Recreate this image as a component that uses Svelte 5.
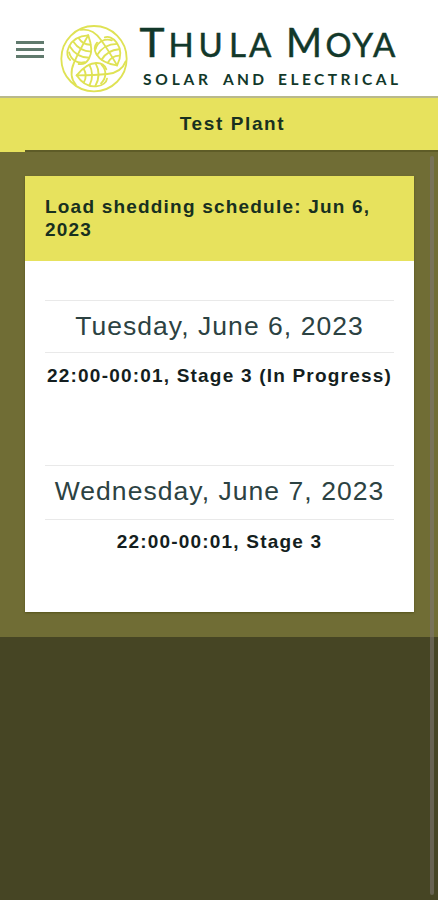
<script>
    const plantName = 'Test Plant';
    const scheduleDate = 'Jun 6, 2023';

    const days = [
        { date: 'Tuesday, June 6, 2023', slots: ['22:00-00:01, Stage 3 (In Progress)'] },
        { date: 'Wednesday, June 7, 2023', slots: ['22:00-00:01, Stage 3'] }
    ];

    // the three leaves of the logo are one shape turned about the centre
    const leafAngles = [0, 120, 240];
</script>

<div class="page">
    <header class="header">
        <button class="menu" aria-label="Menu">
            <span></span>
            <span></span>
            <span></span>
        </button>
        <svg class="emblem" viewBox="0 0 210 210" aria-hidden="true">
            <circle cx="105" cy="104" r="98" />
            {#each leafAngles as angle}
                <g transform="rotate({angle} 105 104)">
                    <path d="M53 154C75 127 94 117 113 117C128 117 138 125 142 136" />
                    <path d="M53 154C69 179 91 189 112 187C131 186 143 174 144 164" />
                    <path d="M53 154C82 154 119 153 145 150C174 147 193 131 200 112" />
                    <path d="M74 134Q86 154 75 174" />
                    <path d="M91 122Q107 152 92 183" />
                    <path d="M110 118Q128 151 109 186" />
                    <path d="M128 123Q140 136 139 151Q138 166 126 178" />
                </g>
            {/each}
        </svg>
        <svg class="wordmark" viewBox="0 0 264 76" role="img" aria-label="Thula Moya Solar and Electrical">
            <g class="name">
                <text x="1.5" y="43" font-size="40" textLength="25" lengthAdjust="spacingAndGlyphs">T</text>
                <text x="30.5" y="43" font-size="33">H</text>
                <text x="60.5" y="43" font-size="33">U</text>
                <text x="91" y="43" font-size="33">L</text>
                <text x="111" y="43" font-size="33">A</text>
                <text x="148" y="43" font-size="40" textLength="36" lengthAdjust="spacingAndGlyphs">M</text>
                <text x="187.5" y="43" font-size="33" textLength="26" lengthAdjust="spacingAndGlyphs">O</text>
                <text x="214.5" y="43" font-size="33">Y</text>
                <text x="235" y="43" font-size="33">A</text>
            </g>
            <g class="tagline">
                <text x="5" y="71" textLength="65">SOLAR</text>
                <text x="85" y="71" textLength="41">AND</text>
                <text x="140" y="71" textLength="120">ELECTRICAL</text>
            </g>
        </svg>
    </header>

    <div class="plant-bar">{plantName}</div>

    <main class="content">
        <section class="card">
            <h2 class="card-header">Load shedding schedule: {scheduleDate}</h2>
            <div class="card-body">
                {#each days as day}
                    <div class="day">
                        <h3>{day.date}</h3>
                        {#each day.slots as slot}
                            <p>{slot}</p>
                        {/each}
                    </div>
                {/each}
            </div>
        </section>
    </main>
    <div class="scrollbar"></div>
</div>

<style>
    :global(body) {
        margin: 0;
        background: #464524;
    }

    .page {
        position: relative;
        height: 900px;
        overflow: hidden;
        font-family: "Liberation Sans", Arial, sans-serif;
        color: #18301f;
    }

    .header {
        display: flex;
        align-items: flex-start;
        box-sizing: border-box;
        height: 98px;
        padding-left: 16px;
        background: #fff;
        border-bottom: 2px solid #b9b98c;
    }

    .menu {
        display: flex;
        flex-direction: column;
        gap: 4px;
        width: 28px;
        margin: 41px 15px 0 0;
        padding: 0;
        border: 0;
        background: none;
    }

    .menu span {
        height: 3px;
        background: #607a6d;
    }

    .emblem {
        width: 70px;
        height: 70px;
        margin-top: 23.5px;
        flex-shrink: 0;
        fill: none;
        stroke: #dfe254;
        stroke-width: 5.5;
        stroke-linecap: round;
    }

    .wordmark {
        width: 264px;
        height: 76px;
        margin: 14px 0 0 9px;
        flex-shrink: 0;
        overflow: visible;
        font-family: Lato, sans-serif;
        fill: #12382a;
    }

    .name {
        font-weight: 400;
        stroke: #12382a;
        stroke-width: 0.5;
    }

    .tagline {
        font-size: 15.5px;
        font-weight: 700;
    }

    .plant-bar {
        position: relative;
        box-sizing: border-box;
        height: 54px;
        padding: 14px 0 0 27px;
        background: #e7e25d;
        font-size: 19px;
        line-height: 23px;
        font-weight: 700;
        letter-spacing: 1.6px;
        text-align: center;
    }

    .plant-bar::after {
        content: "";
        position: absolute;
        left: 25px;
        right: 0;
        bottom: 0;
        height: 2px;
        background: #5e5c27;
    }

    .content {
        height: 485px;
        box-sizing: border-box;
        padding: 24px 24px 25px 25px;
        background: #706d35;
    }

    .card {
        height: 436px;
        background: #fff;
        box-shadow: 0 1px 2px rgba(60, 60, 0, 0.5);
    }

    .card-header {
        box-sizing: border-box;
        height: 85px;
        margin: 0;
        padding: 19px 20px 0;
        background: #e7e25d;
        font-size: 19px;
        line-height: 23px;
        letter-spacing: 1.2px;
    }

    .card-body {
        padding: 39px 20px 0;
    }

    .day {
        height: 165px;
        text-align: center;
    }

    .day h3 {
        margin: 0;
        height: 51px;
        border-top: 1px solid #e9e9e9;
        border-bottom: 1px solid #e9e9e9;
        font-size: 26.5px;
        line-height: 50px;
        font-weight: 400;
        letter-spacing: 1.05px;
        white-space: nowrap;
        color: #2c4242;
    }

    .day p {
        margin: 11px 0 0;
        font-size: 19px;
        line-height: 23px;
        font-weight: 700;
        letter-spacing: 1.2px;
        white-space: nowrap;
        color: #141e20;
    }

    .day:last-child h3 {
        height: 53px;
        line-height: 51px;
    }

    .day:last-child p {
        margin-top: 10px;
    }

    .scrollbar {
        position: absolute;
        top: 156px;
        right: 4px;
        width: 4px;
        height: 739px;
        border-radius: 2px;
        background: rgba(125, 119, 112, 0.6);
    }
</style>
